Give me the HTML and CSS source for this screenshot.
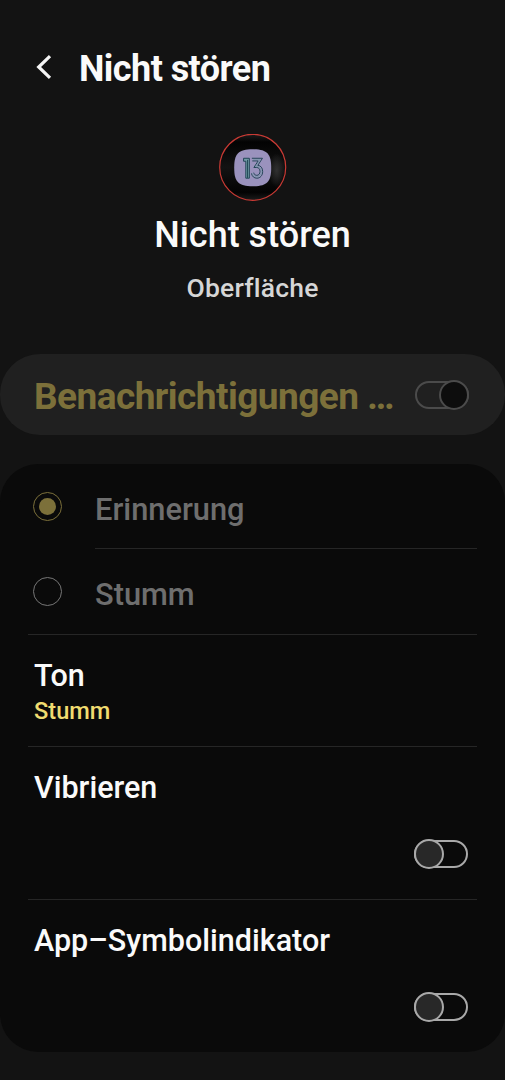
FILE: index.html
```html
<!DOCTYPE html>
<html lang="de">
  <head>
    <meta charset="UTF-8" />
    <meta name="viewport" content="width=device-width, initial-scale=1.0" />
    <title>Nicht stören</title>
    <link rel="stylesheet" href="styles.css">
  </head>
  <body>
    <header class="top-bar">
      <svg class="back-icon" width="18" height="28" viewBox="0 0 18 28">
        <path d="M15 3.200 3.700 14 15 24.800" fill="none" stroke="#f5f5f5" stroke-width="3.200" />
      </svg>
      <h1>Nicht stören</h1>
    </header>

    <section class="app-info">
      <svg class="app-icon" width="68" height="68" viewBox="0.3 0.7 68 68">
        <defs>
          <linearGradient id="disc" x1="0" y1="0" x2="0" y2="1">
            <stop offset="0" stop-color="#1c1c1c" />
            <stop offset="0.12" stop-color="#030303" />
            <stop offset="0.5" stop-color="#131313" />
            <stop offset="0.88" stop-color="#030303" />
            <stop offset="1" stop-color="#1c1c1c" />
          </linearGradient>
          <radialGradient id="shine">
            <stop offset="0" stop-color="#303030" />
            <stop offset="1" stop-color="#303030" stop-opacity="0" />
          </radialGradient>
        </defs>
        <circle cx="34" cy="34" r="33" fill="url(#disc)" />
        <ellipse cx="58" cy="37" rx="8" ry="17" fill="url(#shine)" />
        <circle cx="34" cy="34" r="33" fill="none" stroke="#c93a34" stroke-width="1.200" />
        <path d="M34 16c14.500 0 18.500 4.500 18.500 18.500s-4 18.500-18.500 18.500-18.500-4.500-18.500-18.500 4-18.500 18.500-18.500z" fill="#9a92bd" />
        <g fill="none" stroke="#173c4c" stroke-width="0.900" transform="translate(2 -1) scale(.93 1.06)">
          <path d="M24.600 24.500h6.200v18.800h-3.800v-16h-2.400z" fill="#719ca6" />
          <path d="M28.900 26v17" />
          <path d="M33.500 24.500h11.400l-5 6.700c3.300.2 5.200 2.500 5.200 5.800 0 3.700-2.600 6.300-6.200 6.300-3 0-5.200-1.700-5.800-4.500" />
          <path d="M34 27h6.300l-4.600 6.200h3c2.300 0 3.600 1.500 3.600 3.700s-1.400 3.700-3.500 3.700c-1.700 0-2.900-.9-3.300-2.500" />
          <path d="M35 25.800h7.500l-5 6.500h1.600c2.800 0 4.600 1.900 4.600 4.600 0 3-2 5-4.900 5-2.300 0-3.900-1.200-4.500-3.300" stroke="#719ca6" stroke-width=".7" />
        </g>
      </svg>
      <h2>Nicht stören</h2>
      <p>Oberfläche</p>
    </section>

    <div class="main-switch">
      <span class="main-label">Benachrichtigungen …</span>
      <span class="switch on"></span>
    </div>

    <main class="card">
      <div class="option">
        <span class="radio checked"></span>
        <span class="option-label">Erinnerung</span>
      </div>
      <hr class="inset" />
      <div class="option">
        <span class="radio"></span>
        <span class="option-label">Stumm</span>
      </div>
      <hr />
      <div class="row sound">
        <h3>Ton</h3>
        <p>Stumm</p>
      </div>
      <hr />
      <div class="row toggle-row">
        <h3>Vibrieren</h3>
        <span class="switch"></span>
      </div>
      <hr />
      <div class="row toggle-row">
        <h3>App–Symbolindikator</h3>
        <span class="switch"></span>
      </div>
    </main>
  </body>
</html>
```
FILE: styles.css
```css
*,
*::before {
  box-sizing: border-box;
}
body {
  margin: 0;
  height: 1080px;
  overflow: hidden;
  background-color: #131313;
  color: #fafafa;
  font-family: Roboto, sans-serif;
}
h1,
h2,
h3,
p {
  margin: 0;
  font-weight: 500;
  white-space: nowrap;
}
.top-bar {
  display: flex;
  align-items: center;
  height: 134px;
  padding: 0 0 0 35px;
}
.back-icon {
  margin-right: 26px;
}
h1 {
  margin-top: 3px;
  font-size: 36px;
  line-height: 42px;
  font-weight: 700;
  letter-spacing: -0.55px;
}
.app-info {
  display: flex;
  flex-direction: column;
  align-items: center;
  height: 220px;
}
h2 {
  margin-top: 12px;
  font-size: 36px;
  line-height: 42px;
}
.app-info p {
  margin-top: 17px;
  font-size: 26.5px;
  line-height: 30px;
  letter-spacing: 0.2px;
  color: #d6d6d6;
}
.main-switch {
  display: flex;
  align-items: center;
  justify-content: space-between;
  height: 81px;
  padding: 0 36px 0 34px;
  border-radius: 40px;
  background-color: #202020;
}
.main-label {
  margin-top: 4px;
  font-size: 37px;
  line-height: 44px;
  font-weight: 700;
  letter-spacing: -0.55px;
  white-space: nowrap;
  color: #7c703a;
}

/* switches */
.switch {
  display: flex;
  align-items: center;
  flex: none;
  width: 54px;
  height: 28px;
  border: 2px solid #a9a9a9;
  border-radius: 15px;
}
.switch::before {
  content: "";
  flex: none;
  width: 30px;
  height: 30px;
  margin: 0 -2px;
  border: 2px solid #a9a9a9;
  border-radius: 50%;
  background-color: #282828;
}
.switch.on {
  justify-content: flex-end;
  border-color: #4b4b4b;
}
.switch.on::before {
  border-color: #4b4b4b;
  background-color: #0d0d0d;
}

.card {
  height: 588px;
  margin-top: 29px;
  padding: 0 28px;
  border-radius: 38px;
  background-color: #0a0a0a;
}
hr {
  height: 1px;
  margin: 0;
  border: none;
  background-color: #262626;
}
hr.inset {
  margin-left: 67px;
}
.option {
  display: flex;
  align-items: center;
  height: 84px;
  padding-left: 5px;
}
.option + .inset + .option {
  height: 85px;
}
.radio {
  display: flex;
  align-items: center;
  justify-content: center;
  width: 29px;
  height: 29px;
  border: 1.5px solid #767676;
  border-radius: 50%;
}
.radio.checked {
  border-color: #7c703a;
}
.radio.checked::before {
  content: "";
  width: 17px;
  height: 17px;
  border-radius: 50%;
  background-color: #7c703a;
}
.option-label {
  margin: 7px 0 0 33px;
  font-size: 30.8px;
  line-height: 36px;
  font-weight: 500;
  color: #6e6e6e;
}
.row {
  padding: 0 9px 0 6px;
}
h3 {
  font-size: 30.5px;
  line-height: 36px;
}
.sound {
  height: 111px;
  padding-top: 23px;
}
.sound p {
  margin-top: 3px;
  font-size: 23.6px;
  line-height: 28px;
  color: #f0dc70;
}
.toggle-row {
  display: flex;
  flex-direction: column;
  height: 152px;
  padding-top: 23px;
}
.toggle-row .switch {
  align-self: flex-end;
  margin-top: 34px;
}
```
